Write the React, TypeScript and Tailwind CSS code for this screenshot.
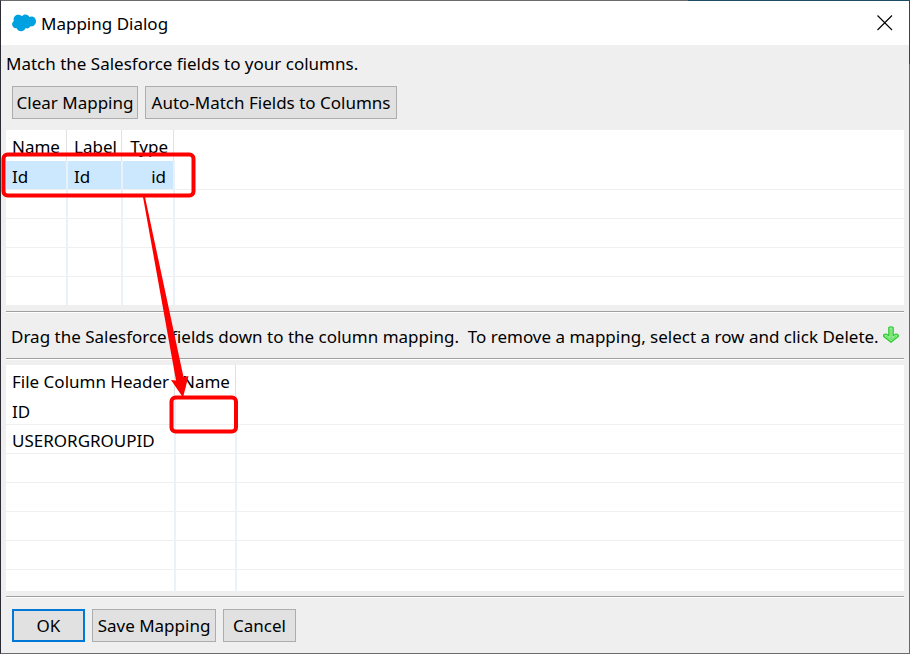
import { useState, type ReactNode } from 'react';

interface DialogButtonProps {
  children: ReactNode;
  className?: string;
  primary?: boolean;
  onClick?: () => void;
}

interface Column {
  title: string;
  width: string;
  align?: string;
}

interface DataTableProps {
  label: string;
  columns: Column[];
  rows: string[][];
  rowCount: number;
  lastRowHeight: string;
  selected?: number | null;
  onSelect?: (index: number) => void;
}

const fieldColumns: Column[] = [
  { title: 'Name', width: 'w-[62px]' },
  { title: 'Label', width: 'w-[55px]' },
  { title: 'Type', width: 'w-[52px]', align: 'text-right' },
];

const mappingColumns: Column[] = [
  { title: 'File Column Header', width: 'w-[170px]' },
  { title: 'Name', width: 'w-[61px]' },
];

function DialogButton({ children, className = '', primary, onClick }: DialogButtonProps) {
  return (
    <button
      type="button"
      onClick={onClick}
      className={`flex h-[33px] items-center justify-center whitespace-nowrap bg-[#e1e1e1] pt-px ${
        primary ? 'border-2 border-[#0078d7]' : 'border border-[#adadad]'
      } ${className}`}
    >
      {children}
    </button>
  );
}

function Separator() {
  return <hr className="h-0.5 border-t border-b border-t-[#a0a0a0] border-b-white" />;
}

function DataTable({ label, columns, rows, rowCount, lastRowHeight, selected, onSelect }: DataTableProps) {
  return (
    <table
      aria-label={label}
      className="w-full table-fixed border-separate border-spacing-0 bg-white text-left"
    >
      <thead>
        <tr>
          {columns.map((col) => (
            <th key={col.title} className={`p-0 font-normal ${col.width}`}>
              <div
                className={`mr-px h-[31px] whitespace-nowrap border-r border-[#e2e2e2] pt-[5px] pr-[5px] pl-1.5 ${col.align ?? ''}`}
              >
                {col.title}
              </div>
            </th>
          ))}
          <th className="p-0" />
        </tr>
      </thead>
      <tbody>
        {Array.from({ length: rowCount }, (_, i) => {
          const last = i === rowCount - 1;
          const line = last ? '' : 'border-b border-b-[#f0f0f0]';
          return (
            <tr key={i} className={last ? lastRowHeight : 'h-[29px]'} onClick={() => rows[i] && onSelect?.(i)}>
              {columns.map((col, c) => (
                <td
                  key={col.title}
                  className={`whitespace-nowrap border-r-2 border-r-[#ebf1f9] pt-[3px] pr-[7px] pb-0 pl-1.5 ${line} ${
                    selected === i ? 'bg-[#cce8ff]' : ''
                  } ${col.align ?? ''}`}
                >
                  {rows[i]?.[c]}
                </td>
              ))}
              <td className={`p-0 ${line}`} />
            </tr>
          );
        })}
      </tbody>
    </table>
  );
}

function CloudIcon() {
  return (
    <svg width="24" height="18" viewBox="0 0 24 18" aria-hidden="true">
      <path
        fill="#00a1e0"
        d="M10 2.200C10.900 1.100 12.100.600 13.400.600c1.800 0 3.200.9 4 2.300.7-.3 1.400-.5 2.100-.5 2.600 0 4.500 2.200 4.500 4.900s-2 5.100-4.600 5.100c-.4 0-.7 0-1-.1-.6 1.200-1.800 2.100-3.200 2.100-.6 0-1.100-.1-1.600-.4-.6 1.800-2.300 3.200-4.500 3.200-2.100 0-3.700-1.200-4.400-3C2.200 14.600.100 12.800.100 10.300c0-1.400.7-2.600 1.800-3.300-.2-.5-.3-1.100-.3-1.700C1.600 2.700 3.800.700 6.400.700c1.500 0 2.800.6 3.600 1.500z"
      />
    </svg>
  );
}

function DownArrowIcon() {
  return (
    <svg width="16" height="17" viewBox="0 0 16 17" className="mb-1 shrink-0" aria-hidden="true">
      <path
        d="M5.800 1.500Q8 0 10.200 1.500V9.500L13 8Q15.500 8 15.500 10.200L8 16.200.5 10.200Q.5 8 3 8L5.800 9.500z"
        fill="#90ee90"
        stroke="#2fc82f"
        strokeWidth="1.200"
        strokeLinejoin="round"
      />
      <path d="M8 3v10M3 10.200l5 3.600 5-3.600" fill="none" stroke="#66dd66" />
    </svg>
  );
}

// Red highlight boxes and the arrow going from the source row to the target cell
function Annotations() {
  return (
    <svg
      width="240"
      height="436"
      viewBox="1 1 240 436"
      className="pointer-events-none absolute top-0 left-0"
      aria-hidden="true"
    >
      <rect x="3.500" y="154.500" width="190" height="41" rx="4" fill="none" stroke="#f00" strokeWidth="4" />
      <rect x="171.500" y="397.500" width="64.500" height="34" rx="4" fill="none" stroke="#f00" strokeWidth="4" />
      <path d="M143 197h2l38.500 180 5-1-5.500 21.500L171 380l5 .5z" fill="#f00" />
    </svg>
  );
}

export default function App() {
  const [selected, setSelected] = useState<number | null>(0);

  return (
    <div className="relative flex min-h-screen flex-col border border-[#6b6b6b] border-l-[#2b2b33] bg-[#efefef] font-['Noto_Sans','Open_Sans',sans-serif] text-[17px] leading-6 text-black">
      <header className="flex h-11 items-center bg-white pl-[11px]">
        <CloudIcon />
        <h1 className="ml-[5px] flex-1 pt-px">Mapping Dialog</h1>
        <button type="button" aria-label="Close" className="flex h-11 w-12 items-center justify-center">
          <svg width="16" height="16" viewBox="0 0 16 16" aria-hidden="true">
            <path d="M.5.500l14.500 14.500M15 .500L.5 15" stroke="#000" strokeWidth="1.100" />
          </svg>
        </button>
      </header>

      <main className="flex flex-1 flex-col px-[5px]">
        <p className="pt-[7px]">Match the Salesforce fields to your columns.</p>

        <div className="mt-2.5 flex gap-[7px] px-1.5">
          <DialogButton className="w-[126px]" onClick={() => setSelected(null)}>
            Clear Mapping
          </DialogButton>
          <DialogButton className="w-[252px]">Auto-Match Fields to Columns</DialogButton>
        </div>

        <div className="mt-[11px]">
          <DataTable
            label="Salesforce fields"
            columns={fieldColumns}
            rows={[['Id', 'Id', 'id']]}
            rowCount={5}
            lastRowHeight="h-[28px]"
            selected={selected}
            onSelect={setSelected}
          />
        </div>

        <div className="mt-1.5">
          <Separator />
        </div>
        <div className="flex h-[45px] items-center gap-1 pt-0.5 pl-[5px]">
          <p className="whitespace-pre">
            {'Drag the Salesforce fields down to the column mapping.  To remove a mapping, select a row and click Delete.'}
          </p>
          <DownArrowIcon />
        </div>
        <Separator />

        <div className="mt-[5px]">
          <DataTable
            label="Column mapping"
            columns={mappingColumns}
            rows={[['ID'], ['USERORGROUPID']]}
            rowCount={7}
            lastRowHeight="h-[21px]"
          />
        </div>

        <div className="mt-[5px]">
          <Separator />
        </div>
        <footer className="flex gap-[7px] px-1.5 py-[11px]">
          <DialogButton primary className="w-[73px]">
            OK
          </DialogButton>
          <DialogButton className="w-[124px]">Save Mapping</DialogButton>
          <DialogButton className="w-[73px]">Cancel</DialogButton>
        </footer>
      </main>

      {/* accent on the top right corner of the window frame */}
      <div className="pointer-events-none absolute -top-px -right-px h-16 w-[222px] border-t border-r border-[#1d4e66]" />
      <Annotations />
    </div>
  );
}
